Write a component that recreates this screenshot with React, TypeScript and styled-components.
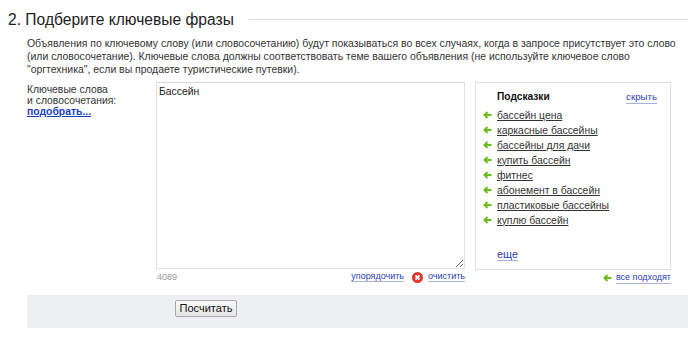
import React from 'react';
import styled, { createGlobalStyle } from 'styled-components';

const GlobalStyle = createGlobalStyle`
    body {
        margin: 0;
        background: #fff;
        font-family: "Liberation Sans", Arial, sans-serif;
        color: #333;
    }
`;

const suggestions = [
    'бассейн цена',
    'каркасные бассейны',
    'бассейны для дачи',
    'купить бассейн',
    'фитнес',
    'абонемент в бассейн',
    'пластиковые бассейны',
    'куплю бассейн',
];

const Arrow = () => (
    <svg width="9" height="8" viewBox="0 0 9 8">
        <path d="M8.5 4H2M4.5 1L1.5 4l3 3" stroke="#6abf1e" strokeWidth="2" fill="none" />
    </svg>
);

const ClearIcon = () => (
    <svg width="11" height="11" viewBox="0 0 11 11">
        <circle cx="5.5" cy="5.5" r="5.5" fill="#e2362c" />
        <path d="M3.5 3.5l4 4M7.5 3.5l-4 4" stroke="#fff" strokeWidth="1.8" />
    </svg>
);

const App = () => {
    return (
        <Page>
            <GlobalStyle />
            <Header>
                <Title>2. Подберите ключевые фразы</Title>
                <Rule />
            </Header>
            <Description>
                Объявления по ключевому слову (или словосочетанию) будут показываться во всех случаях, когда в запросе присутствует это слово
                (или словосочетание). Ключевые слова должны соответствовать теме вашего объявления (не используйте ключевое слово
                "оргтехника", если вы продаете туристические путевки).
            </Description>
            <FormRow>
                <Label>
                    Ключевые слова<br />
                    и словосочетания:<br />
                    <PickLink href="#">подобрать...</PickLink>
                </Label>
                <EditorColumn>
                    <Keywords defaultValue="Бассейн" />
                    <EditorFooter>
                        <Counter>4089</Counter>
                        <Actions>
                            <ActionLink href="#" $size={9}>упорядочить</ActionLink>
                            <ClearAction>
                                <ClearIcon />
                                <ActionLink href="#" $size={9}>очистить</ActionLink>
                            </ClearAction>
                        </Actions>
                    </EditorFooter>
                </EditorColumn>
                <HintColumn>
                    <HintBox>
                        <HintHead>
                            <HintTitle>Подсказки</HintTitle>
                            <ActionLink href="#" $size={9.7}>скрыть</ActionLink>
                        </HintHead>
                        <HintList>
                            {suggestions.map((s) => (
                                <HintItem key={s}>
                                    <Arrow />
                                    <HintLink href="#">{s}</HintLink>
                                </HintItem>
                            ))}
                        </HintList>
                        <More>
                            <ActionLink href="#" $size={11}>еще</ActionLink>
                        </More>
                    </HintBox>
                    <AllFit>
                        <Arrow />
                        <ActionLink href="#" $size={9}>все подходят</ActionLink>
                    </AllFit>
                </HintColumn>
            </FormRow>
            <SubmitBar>
                <Button>Посчитать</Button>
            </SubmitBar>
        </Page>
    );
};

const Page = styled.div`
    width: 688px;
    padding-top: 10px;
`;

const Header = styled.div`
    display: flex;
    align-items: center;
    gap: 15px;
    padding-left: 8px;
`;

const Title = styled.h2`
    margin: 0;
    font-size: 15.6px;
    font-weight: normal;
    color: #222;
    line-height: 20px;
    white-space: nowrap;
`;

const Rule = styled.div`
    flex: 1;
    border-top: 1px solid #dcdcdc;
    margin-top: -2px;
`;

const Description = styled.p`
    margin: 7px 8px 0 27px;
    font-size: 10.45px;
    line-height: 13px;
    color: #333;
`;

const FormRow = styled.div`
    display: flex;
    margin-top: 6px;
    padding-left: 27px;
`;

const Label = styled.div`
    width: 129px;
    padding-top: 2px;
    font-size: 10.4px;
    line-height: 11px;
    color: #333;
`;

const PickLink = styled.a`
    font-weight: bold;
    color: #1c3ec4;
    text-decoration: underline;
`;

const EditorColumn = styled.div`
    width: 309px;
    display: flex;
    flex-direction: column;
`;

const Keywords = styled.textarea`
    box-sizing: border-box;
    width: 309px;
    height: 187px;
    margin: 0;
    padding: 2px 2px;
    border: 1px solid #e0e0e0;
    border-top-color: #d6d6d6;
    font-family: "Liberation Sans", Arial, sans-serif;
    font-size: 10.4px;
    line-height: 13px;
    color: #222;
    resize: both;
    outline: none;
`;

const EditorFooter = styled.div`
    display: flex;
    justify-content: space-between;
    align-items: center;
    margin-top: 2px;
    height: 12px;
`;

const Counter = styled.span`
    font-size: 9px;
    color: #999;
    padding-left: 1px;
`;

const Actions = styled.div`
    display: flex;
    align-items: center;
    gap: 8px;
`;

const ClearAction = styled.span`
    display: flex;
    align-items: center;
    gap: 5px;
`;

const ActionLink = styled.a<{ $size: number }>`
    font-size: ${(p) => p.$size}px;
    color: #2a3fb8;
    text-decoration: none;
    border-bottom: 1px solid #a9b0e0;
    line-height: 1.1;
`;

const HintColumn = styled.div`
    margin-left: 10px;
    width: 196px;
    display: flex;
    flex-direction: column;
`;

const HintBox = styled.div`
    box-sizing: border-box;
    height: 188px;
    border: 1px solid #e0e0e0;
    padding: 8px 13px 0 7px;
    display: flex;
    flex-direction: column;
`;

const HintHead = styled.div`
    display: flex;
    justify-content: space-between;
    align-items: baseline;
    padding-left: 14px;
`;

const HintTitle = styled.span`
    font-size: 10.2px;
    font-weight: bold;
    color: #111;
`;

const HintList = styled.ul`
    list-style: none;
    margin: 4px 0 0;
    padding: 0;
`;

const HintItem = styled.li`
    display: flex;
    align-items: center;
    gap: 5px;
    height: 15px;
`;

const HintLink = styled.a`
    font-size: 10.4px;
    color: #333;
    text-decoration: underline;
`;

const More = styled.div`
    margin-top: auto;
    padding: 0 0 7px 14px;
`;

const AllFit = styled.div`
    display: flex;
    justify-content: flex-end;
    align-items: center;
    gap: 4px;
    margin-top: 3px;
`;

const SubmitBar = styled.div`
    margin: 11px 0 0 27px;
    height: 33px;
    box-sizing: border-box;
    background: #eeeff2;
    display: flex;
    align-items: flex-start;
    padding: 5px 0 0 148px;
`;

const Button = styled.button`
    font-family: "Liberation Sans", Arial, sans-serif;
    font-size: 11px;
    color: #111;
    height: 17px;
    width: 62px;
    padding: 0;
    border: 1px solid #aaa;
    border-radius: 2px;
    background: linear-gradient(#fafafa, #e4e4e4);
`;

export default App;
